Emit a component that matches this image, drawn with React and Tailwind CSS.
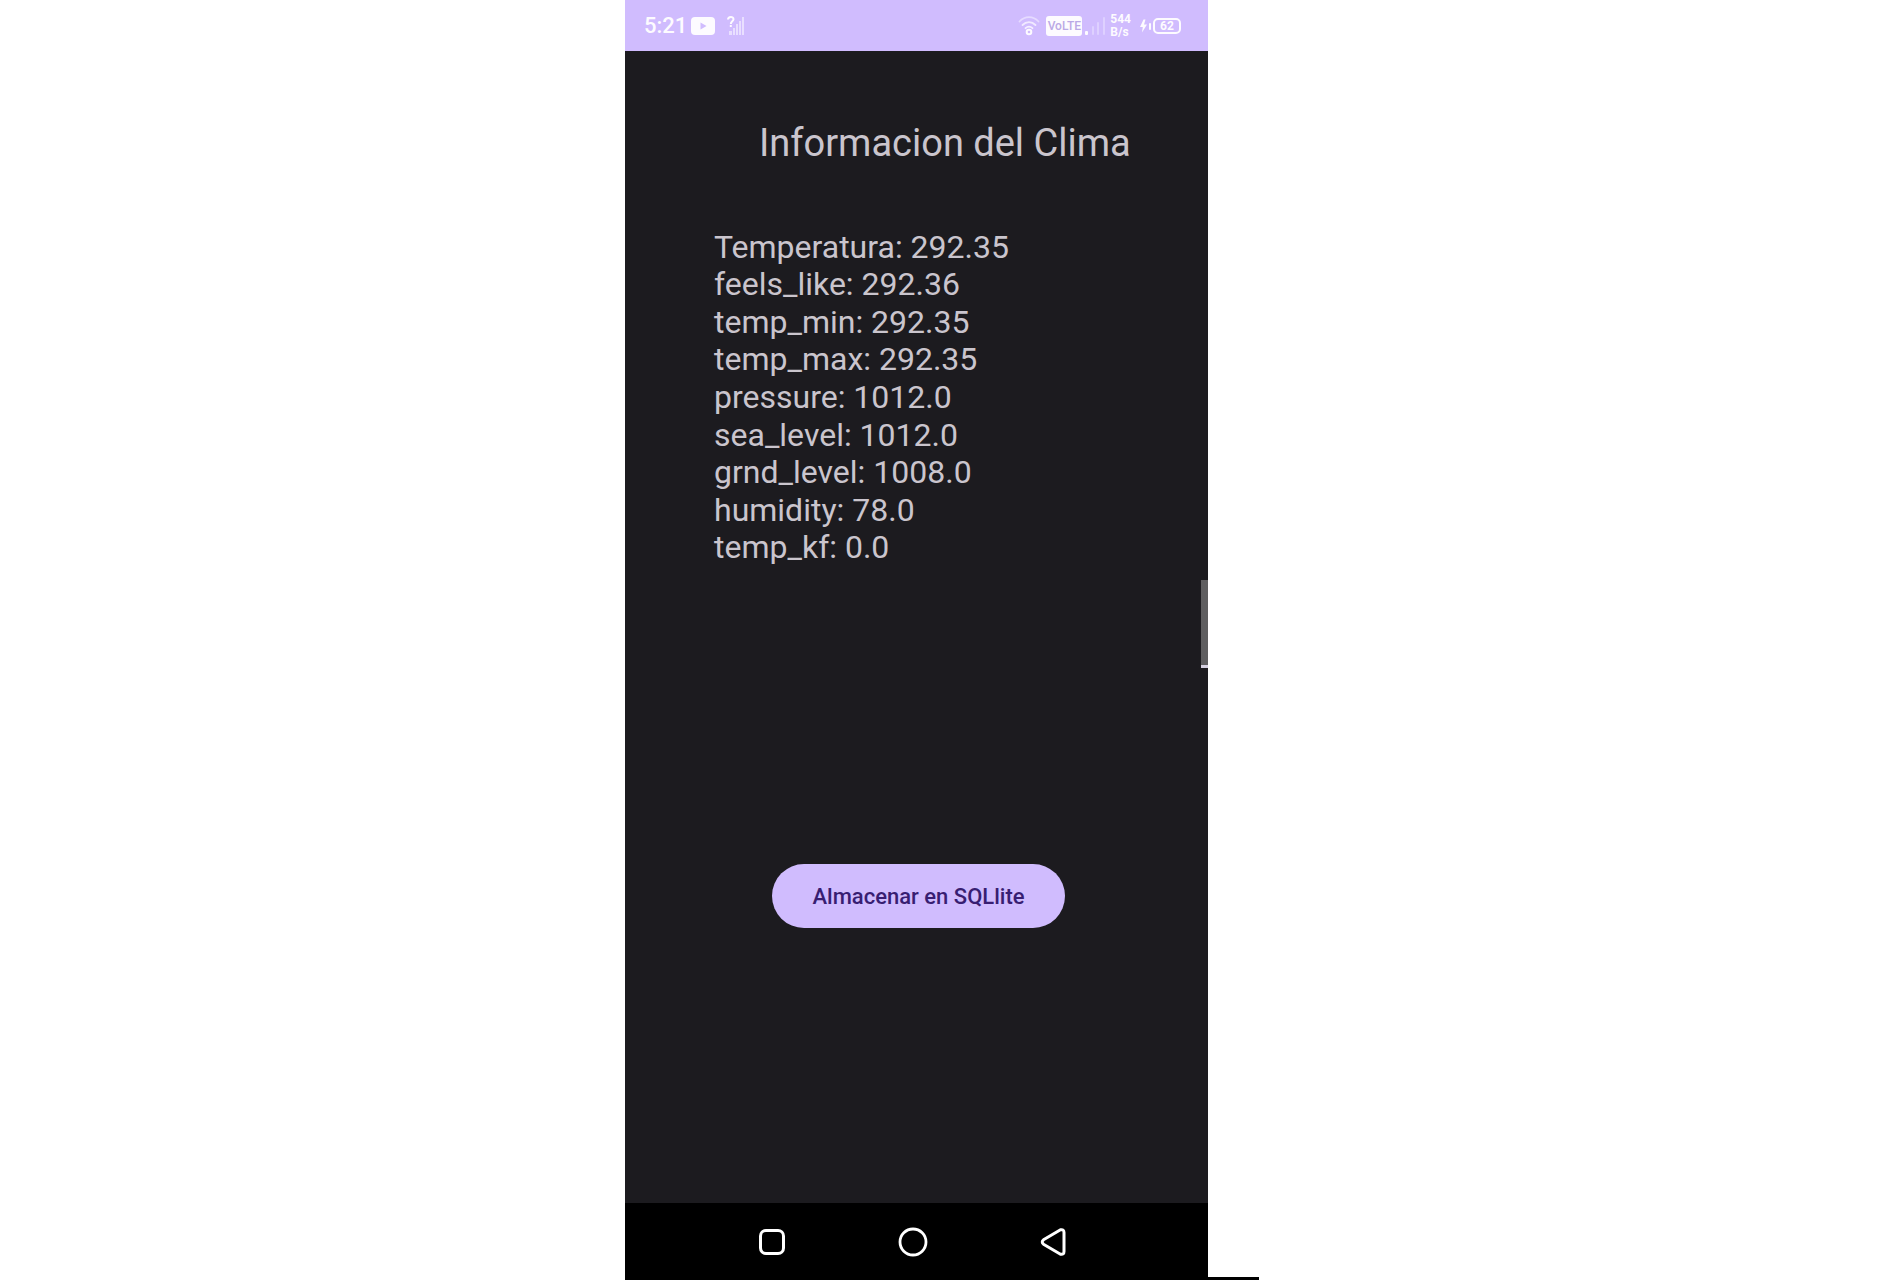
const readings = [
  ["Temperatura", "292.35"],
  ["feels_like", "292.36"],
  ["temp_min", "292.35"],
  ["temp_max", "292.35"],
  ["pressure", "1012.0"],
  ["sea_level", "1012.0"],
  ["grnd_level", "1008.0"],
  ["humidity", "78.0"],
  ["temp_kf", "0.0"],
];

function YouTubeIcon() {
  return (
    <svg className="ml-1 h-[18px] w-6" viewBox="0 0 24 18" fill="none">
      <rect width="24" height="18" rx="4" fill="#fdfbff" />
      <path d="M9.5 5.5v7l6-3.5z" fill="#d0bcfe" />
    </svg>
  );
}

function NoSignalIcon() {
  return (
    <svg className="ml-3 h-5 w-[18px]" viewBox="0 0 18 20" fill="none">
      <g fill="#e9dfff">
        <rect x="2" y="15" width="3" height="4" />
        <rect x="6" y="12" width="2" height="7" />
        <rect x="9" y="8" width="2" height="11" />
        <rect x="12" y="5" width="2" height="14" />
        <rect x="15" y="1" width="2" height="18" />
      </g>
      <path d="M1 3.500C1.200 .2 6.500 .2 6.500 3.300 6.500 5.300 3.800 5.300 3.800 8" stroke="#fdfbff" strokeWidth="2" />
      <rect x="2.800" y="9" width="2" height="2" fill="#fdfbff" />
    </svg>
  );
}

function WifiIcon() {
  return (
    <svg className="h-5 w-[22px]" viewBox="0 0 22 20" fill="none" strokeLinecap="round">
      <path d="M1.500 5.500C7-.3 15-.3 20.500 5.500" stroke="#e6dbff" strokeWidth="1.800" />
      <path d="M4.500 9C8.300 5.200 13.700 5.200 17.500 9" stroke="#f1eaff" strokeWidth="1.800" />
      <path d="M7.500 12.200C9.600 10.300 12.400 10.300 14.500 12.200" stroke="#f6f1ff" strokeWidth="1.800" />
      <circle cx="11" cy="16" r="2.300" stroke="#fdfbff" strokeWidth="2" />
    </svg>
  );
}

function SignalIcon() {
  return (
    <svg className="ml-0.5 h-5 w-[22px]" viewBox="0 0 22 20" fill="none">
      <rect x="1" y="15" width="3" height="4" rx="1" fill="#fdfbff" />
      <g fill="#ded0ff">
        <rect x="8" y="10" width="2" height="9" rx="1" />
        <rect x="13" y="6" width="2" height="13" rx="1" />
        <rect x="19" y="1" width="2" height="18" rx="1" />
      </g>
    </svg>
  );
}

function BoltIcon() {
  return (
    <svg className="h-[14px] w-3" viewBox="0 0 12 14">
      <path d="M4.500 .5 1 8h2.800L3 13.500 8 5.500H5L6.500 .5z" fill="#fdfbff" />
      <rect x="10" y="4" width="2" height="7" rx="1" fill="#fdfbff" />
    </svg>
  );
}

function StatusBar() {
  return (
    <header className="flex h-[51px] items-center bg-[#d0bcfe] pr-[27px] pl-[19px] text-[#fdfbff]">
      <span className="text-[22px] font-medium">5:21</span>
      <YouTubeIcon />
      <NoSignalIcon />
      <div className="ml-auto flex items-center">
        <WifiIcon />
        <span className="ml-1.5 flex h-5 w-9 items-center justify-center rounded-[3px] bg-[#fdfbff] text-[12px] leading-none font-medium text-[#bba9e6]">
          VoLTE
        </span>
        <SignalIcon />
        <span className="ml-1 text-[12px] leading-[13px] font-bold">
          544
          <br />
          B/s
        </span>
        <span className="ml-2">
          <BoltIcon />
        </span>
        <span className="ml-0.5 flex h-4 w-7 items-center justify-center rounded-[5px] border-2 border-[#fdfbff] text-[12px] leading-none font-bold">
          62
        </span>
      </div>
    </header>
  );
}

function NavBar() {
  const button = "flex h-12 w-12 items-center justify-center";
  return (
    <nav className="flex h-[77px] items-center justify-center gap-[93px] bg-black pr-2">
      <button type="button" aria-label="Recientes" className={button}>
        <svg className="h-[30px] w-[30px]" viewBox="0 0 30 30" fill="none" stroke="#fff" strokeWidth="3">
          <rect x="3.500" y="3.500" width="23" height="23" rx="5.500" />
        </svg>
      </button>
      <button type="button" aria-label="Inicio" className={button}>
        <svg className="h-[30px] w-[30px]" viewBox="0 0 30 30" fill="none" stroke="#fff" strokeWidth="2.800">
          <circle cx="15" cy="15" r="13" />
        </svg>
      </button>
      <button type="button" aria-label="Atrás" className={button}>
        <svg className="h-[30px] w-[30px]" viewBox="0 0 30 30" fill="none" stroke="#fff" strokeWidth="3" strokeLinejoin="round">
          <path d="M21.500 2.800 4.500 12.800Q2 15 4.500 17.200L21.500 27.200Q25 28 25 24.500V5.500Q25 2 21.500 2.800z" />
        </svg>
      </button>
    </nav>
  );
}

export default function App() {
  return (
    <div className="flex min-h-screen items-stretch justify-center bg-white pl-1 font-[Roboto,sans-serif]">
      <div className="relative flex w-full max-w-[583px] flex-col bg-[#1c1b1f]">
        <StatusBar />
        <main className="flex flex-1 flex-col text-[#cac5cd]">
          <h1 className="mt-[69px] ml-[134px] text-[38px] leading-[46px]">Informacion del Clima</h1>
          <ul className="mt-[62px] ml-[89px] grid h-[338px] grid-rows-9 text-[32px] leading-none">
            {readings.map(([name, value]) => (
              <li key={name} className="flex items-center whitespace-pre">
                {name}: {value}
              </li>
            ))}
          </ul>
          <button
            type="button"
            className="mt-[298px] ml-[147px] h-16 w-[293px] rounded-full bg-[#d0bcfe] text-[22px] font-medium text-[#381e72]"
          >
            Almacenar en SQLlite
          </button>
        </main>
        <NavBar />
        <div className="absolute top-[580px] right-0 h-[88px] w-[7px] border-b-3 border-[#d5d0e0] bg-[#5f5e60]" />
      </div>
      <div className="h-[3px] w-[51px] self-end bg-black" />
    </div>
  );
}
